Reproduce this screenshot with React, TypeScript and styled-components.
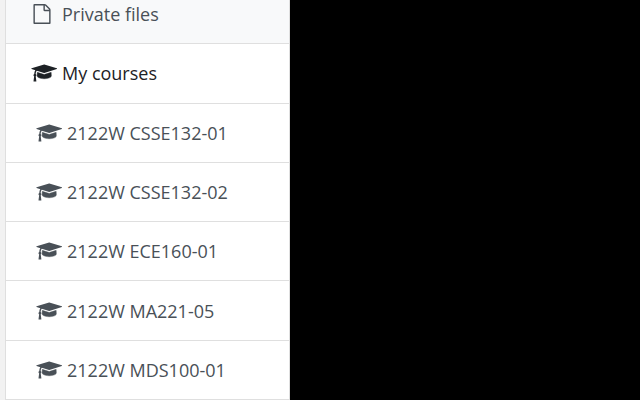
import React from "react";
import styled, { createGlobalStyle } from "styled-components";

const GlobalStyle = createGlobalStyle`
  *, *::before, *::after { box-sizing: border-box; }
  body { margin: 0; background: #000; overflow: hidden; }
`;

const Page = styled.div`
  display: flex;
  height: 100vh;
  overflow: hidden;
  font-family: "Open Sans", "Noto Sans", sans-serif;
  font-size: 18px;
  line-height: 28px;
`;

const Drawer = styled.nav`
  flex: 0 0 290px;
  padding-left: 5px;
  background: #f2f2f2;
`;

const NavList = styled.ul`
  display: grid;
  grid-auto-rows: 1fr;
  height: calc(100% + 15px);
  margin: -15px 0 0;
  padding: 0;
  list-style: none;
  border: 1px solid #dfdfdf;
  border-width: 0 1px;
`;

const NavItem = styled.li`
  display: flex;
  border-bottom: 1px solid #dfdfdf;
`;

type Tone = "hover" | "heading" | "course";

const NavLink = styled.a<{ $tone: Tone }>`
  display: flex;
  flex: 1;
  align-items: center;
  gap: 5px;
  padding-left: ${({ $tone }) => ($tone === "course" ? 30 : 25)}px;
  background: ${({ $tone }) => ($tone === "hover" ? "#f8f9fa" : "#fff")};
  color: ${({ $tone }) => ($tone === "heading" ? "#1d2125" : "#495057")};
  text-decoration: none;
  white-space: nowrap;
`;

const IconBox = styled.span<{ $start?: boolean }>`
  display: flex;
  flex: 0 0 26px;
  justify-content: ${({ $start }) => ($start ? "flex-start" : "center")};
`;

const Glyph = styled.svg`
  display: block;
  height: 20px;
  fill: currentColor;
`;

const GraduationCap = () => (
  <IconBox>
    <Glyph viewBox="-20 0 2304 1792" width="26" aria-hidden="true">
      <path
        stroke="currentColor"
        strokeWidth="36"
        d="M1774 836l18 316q4 69-82 128t-235 93.500-323 34.500-323-34.500-235-93.500-82-128l18-316 574 181q22 7 48 7t48-7z"
      />
      <path d="M2304 512q0 23-22 31l-1120 352q-4 1-10 1t-10-1l-652-206q-43 34-71 111.500t-34 178.500q63 36 63 109 0 69-58 107l58 433q2 14-8 25-9 11-24 11h-192q-15 0-24-11-10-11-8-25l58-433q-58-38-58-107 0-73 65-111 11-207 98-330l-333-104q-22-8-22-31t22-31l1120-352q4-1 10-1t10 1l1120 352q22 8 22 31z" />
    </Glyph>
  </IconBox>
);

const FileOutline = () => (
  <IconBox $start>
    <Glyph viewBox="0 0 1792 1792" width="22" aria-hidden="true">
      <path d="M1596 380q28 28 48 76t20 88v1152q0 40-28 68t-68 28h-1344q-40 0-68-28t-28-68v-1600q0-40 28-68t68-28h896q40 0 88 20t76 48zm-444-244v376h376q-10-29-22-41l-313-313q-12-12-41-22zm384 1528v-1024h-416q-40 0-68-28t-28-68v-416h-768v1536h1280z" />
    </Glyph>
  </IconBox>
);

const items: { label: string; tone: Tone }[] = [
  { label: "Private files", tone: "hover" },
  { label: "My courses", tone: "heading" },
  { label: "2122W CSSE132-01", tone: "course" },
  { label: "2122W CSSE132-02", tone: "course" },
  { label: "2122W ECE160-01", tone: "course" },
  { label: "2122W MA221-05", tone: "course" },
  { label: "2122W MDS100-01", tone: "course" },
];

export default function App() {
  return (
    <>
      <GlobalStyle />
      <Page>
        <Drawer aria-label="Site">
          <NavList>
            {items.map(({ label, tone }) => (
              <NavItem key={label}>
                <NavLink href="#" $tone={tone}>
                  {tone === "hover" ? <FileOutline /> : <GraduationCap />}
                  <span>{label}</span>
                </NavLink>
              </NavItem>
            ))}
          </NavList>
        </Drawer>
      </Page>
    </>
  );
}
